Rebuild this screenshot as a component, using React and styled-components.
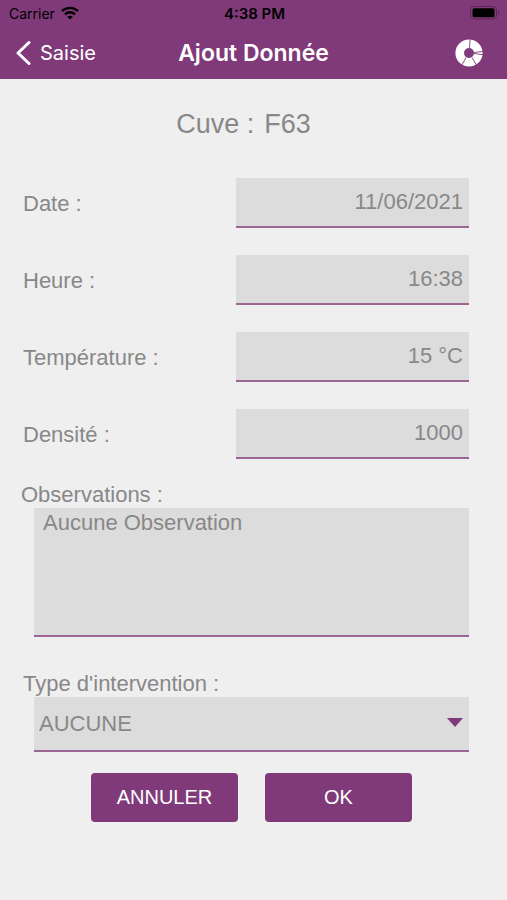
import React, { useState } from 'react'
import styled, { createGlobalStyle } from 'styled-components'

const colors = {
    primary: '#803a7a',
    line: '#9b6695',
    page: '#efefef',
    field: '#dcdcdc',
    text: '#888888',
}

const measures = [
    { id: 'date', label: 'Date :', value: '11/06/2021' },
    { id: 'heure', label: 'Heure :', value: '16:38' },
    { id: 'temperature', label: 'Température :', value: '15 °C' },
    { id: 'densite', label: 'Densité :', value: '1000' },
]

function WifiIcon() {
    return (
        <svg width="18" height="14" viewBox="0 0 18 14" fill="none" stroke="#000" strokeWidth="2.4">
            <path d="M1 5.2C5.5 0.7 12.5 0.7 17 5.2" />
            <path d="M4 8.4C6.8 5.6 11.2 5.6 14 8.4" />
            <path d="M9 13.6L6.2 10.8C7.8 9.3 10.2 9.3 11.8 10.8Z" fill="#000" stroke="none" />
        </svg>
    )
}

function BatteryIcon() {
    return (
        <svg width="30" height="14" viewBox="0 0 30 14">
            <rect x="0.5" y="0.5" width="26" height="12.5" rx="3.5" fill="none" stroke="#000" strokeOpacity="0.3" />
            <rect x="2.5" y="2.3" width="22" height="9" rx="1.5" fill="#000" />
            <path d="M28 4.8C29.6 5.4 29.6 8 28 8.6Z" fill="#000" fillOpacity="0.4" />
        </svg>
    )
}

function BackIcon() {
    return (
        <svg width="16" height="26" viewBox="0 0 16 26" fill="none" stroke="#fff" strokeWidth="3" strokeLinecap="round" strokeLinejoin="round">
            <path d="M14 2.5L3 13L14 23.5" />
        </svg>
    )
}

function WheelIcon() {
    return (
        <svg width="28" height="28" viewBox="0 0 28 28">
            <circle cx="14" cy="14" r="13.6" fill="#fff" />
            <g stroke={colors.primary} strokeWidth="0.9">
                <path d="M15.2 0L14.4 9" />
                <path d="M18 13.6L28 12.4" />
                <path d="M18 14.4L28 15.6" />
                <path d="M17 18.5L21.6 26.5" />
                <path d="M11 18.5L6.6 26.5" />
            </g>
            <circle cx="14" cy="14" r="5" fill={colors.primary} />
        </svg>
    )
}

function App() {
    const [values, setValues] = useState(
        Object.fromEntries(measures.map(({ id, value }) => [id, value]))
    )

    return (
        <>
            <GlobalStyle />
            <Header>
                <StatusBar>
                    <Carrier>Carrier <WifiIcon /></Carrier>
                    <Clock>4:38 PM</Clock>
                    <BatteryIcon />
                </StatusBar>
                <NavBar>
                    <BackLink href="#saisie"><BackIcon />Saisie</BackLink>
                    <NavTitle>Ajout Donnée</NavTitle>
                    <IconButton type="button" aria-label="Menu"><WheelIcon /></IconButton>
                </NavBar>
            </Header>
            <Form onSubmit={(e) => e.preventDefault()}>
                <Tank><span>Cuve :</span><span>F63</span></Tank>
                <Rows>
                    {measures.map(({ id, label }) => (
                        <Row key={id}>
                            <Label htmlFor={id} $indent>{label}</Label>
                            <Input
                                id={id}
                                value={values[id]}
                                onChange={(e) => setValues({ ...values, [id]: e.target.value })}
                            />
                        </Row>
                    ))}
                </Rows>
                <Group $space={22}>
                    <Label htmlFor="observations">Observations :</Label>
                    <TextArea id="observations" defaultValue="Aucune Observation" />
                </Group>
                <Group $space={33}>
                    <Label htmlFor="type" $indent>Type d'intervention :</Label>
                    <SelectBox>
                        <Select id="type" defaultValue="AUCUNE">
                            <option>AUCUNE</option>
                        </Select>
                        <Arrow width="16" height="9" viewBox="0 0 16 9">
                            <path d="M0 0H16L8 9Z" fill={colors.primary} />
                        </Arrow>
                    </SelectBox>
                </Group>
                <Actions>
                    <Button type="button">ANNULER</Button>
                    <Button type="submit">OK</Button>
                </Actions>
            </Form>
        </>
    )
}

export default App

const GlobalStyle = createGlobalStyle`
    * {
        box-sizing: border-box;
    }

    body {
        margin: 0;
        background: ${colors.page};
        color: ${colors.text};
        font-family: "Liberation Sans", Arial, sans-serif;
        font-size: 22px;
    }

    svg {
        display: block;
        flex-shrink: 0;
    }
`

const Header = styled.header`
    background: ${colors.primary};
    font-family: Inter, sans-serif;
`

const StatusBar = styled.div`
    display: grid;
    grid-template-columns: 1fr auto 1fr;
    align-items: center;
    height: 26px;
    padding: 0 7px 0 9px;
    color: #000;
    font-size: 14px;

    > :last-child {
        justify-self: end;
    }
`

const Carrier = styled.span`
    display: flex;
    align-items: center;
    gap: 6px;
`

const Clock = styled.span`
    font-size: 15px;
    font-weight: 600;
`

const NavBar = styled.nav`
    display: grid;
    grid-template-columns: 1fr auto 1fr;
    align-items: center;
    height: 53px;
    padding: 0 15px;
`

const BackLink = styled.a`
    display: flex;
    align-items: center;
    gap: 9px;
    color: #fff;
    font-size: 20px;
    text-decoration: none;
`

const NavTitle = styled.h1`
    margin: 0;
    color: #fff;
    font-size: 23px;
    font-weight: 600;
`

const IconButton = styled.button`
    justify-self: end;
    padding: 0 9px 0 0;
    border: 0;
    background: none;
    cursor: pointer;
`

const Form = styled.form`
    padding: 29px 38px 24px 21px;
`

const Tank = styled.h2`
    display: flex;
    justify-content: center;
    gap: 10px;
    margin: 0 0 38px;
    padding-right: 3px;
    font-size: 27px;
    font-weight: 400;
    line-height: 32px;
`

const Rows = styled.div`
    display: grid;
    gap: 27px;
`

const Row = styled.div`
    display: grid;
    grid-template-columns: 12fr 13fr;
    align-items: center;
`

const Label = styled.label`
    padding-left: ${({ $indent }) => ($indent ? 2 : 0)}px;
    line-height: 27px;
`

const Input = styled.input`
    width: 100%;
    height: 50px;
    padding: 0 6px;
    border: 0;
    border-bottom: 2px solid ${colors.line};
    border-radius: 0;
    outline: 0;
    background: ${colors.field};
    color: inherit;
    font: inherit;
    text-align: right;
`

const Group = styled.div`
    display: grid;
    margin-top: ${({ $space }) => $space}px;
`

const TextArea = styled.textarea`
    display: block;
    height: 129px;
    margin-left: 13px;
    padding: 2px 9px;
    border: 0;
    border-bottom: 2px solid ${colors.line};
    border-radius: 0;
    outline: 0;
    background: ${colors.field};
    color: inherit;
    font: inherit;
    line-height: 25px;
    resize: none;
`

const SelectBox = styled.div`
    position: relative;
    margin-left: 13px;
`

const Select = styled.select`
    display: block;
    width: 100%;
    height: 55px;
    padding: 0 5px;
    border: 0;
    border-bottom: 2px solid ${colors.line};
    border-radius: 0;
    outline: 0;
    appearance: none;
    background: ${colors.field};
    color: inherit;
    font: inherit;
`

const Arrow = styled.svg`
    position: absolute;
    top: 21px;
    right: 6px;
    pointer-events: none;
`

const Actions = styled.div`
    display: flex;
    justify-content: center;
    gap: 27px;
    margin: 21px 0 0 13px;
`

const Button = styled.button`
    width: 147px;
    height: 49px;
    border: 0;
    border-radius: 4px;
    background: ${colors.primary};
    color: #fff;
    font-family: inherit;
    font-size: 20px;
    cursor: pointer;
`
